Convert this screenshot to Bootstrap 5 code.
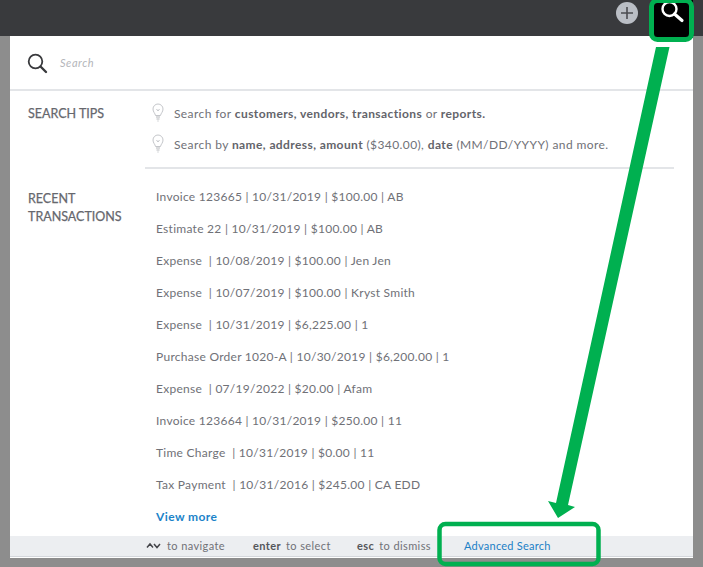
<!DOCTYPE html>
<html lang="en">
<head>
<meta charset="utf-8">
<title>Search</title>
<link href="https://cdn.jsdelivr.net/npm/bootstrap@5.3.0/dist/css/bootstrap.min.css" rel="stylesheet">
<style>
html,body{height:100%;margin:0;overflow:hidden}
body{background:#8d8d8d;font-family:Lato,"Liberation Sans",sans-serif;color:#707177;font-size:12px;position:relative}
.topbar{height:36px;background:#393a3d;padding-right:10px}
.plus-btn{width:22px;height:22px;border-radius:50%;background:#babec5;margin-right:14px;margin-top:-10px}
.search-tab{width:41px;height:38px;background:#000;align-self:flex-start}
.panel{margin:0 10px;height:522px;background:#fff;width:683px}
.search-row{height:55px;border-bottom:2px solid #e3e5e8;padding-left:17px;padding-top:2px}
.search-ph{font-style:italic;color:#b4b6ba;font-size:11px;margin-left:12px;letter-spacing:.55px}
.side-label{width:135px;flex:none;padding-left:18px;font-size:12.5px;font-weight:400;color:#66676d;line-height:18px;-webkit-text-stroke:.25px #66676d}
.tips{height:77px;padding-top:14px}
.tips-body{width:529px}
.tip{height:31px;display:flex;gap:10px;letter-spacing:.4px;line-height:18px;padding-left:7px}
.tip b{font-weight:700;color:#63646a}
.tip svg{flex:none;margin-top:-2px}
.tips-rule{border-top:2px solid #e3e5e8}
.recent{padding-top:21px}
.recent .side-label{padding-top:1px}
.tx-list{padding-left:11px;letter-spacing:.27px;margin-top:-1px}
.tx{height:32px;line-height:18px}
.view-more{color:#1b83c9;font-weight:700;text-decoration:none;letter-spacing:.4px;display:block;line-height:18px}
.foot{height:21px;background:#eceef1;border-bottom:1px solid #d4d7dc;font-size:11px;letter-spacing:.4px;padding-top:1px}
.foot b{font-weight:700;color:#55565b}
.adv{color:#1b7fc6;text-decoration:none;letter-spacing:.25px}
.key-gap{margin-left:5px}
.nav-gap{margin-left:6px}
.f1{margin-left:136px;width:107px}.f2{width:104px}.f3{width:107px}
.overlay{position:absolute;left:0;top:0;width:703px;height:567px;pointer-events:none}
.body-main{height:445px}
</style>
</head>
<body>
<div class="topbar d-flex justify-content-end align-items-center">
  <div class="plus-btn d-flex align-items-center justify-content-center">
    <svg width="14" height="14" viewBox="0 0 14 14"><path d="M7 1v12M1 7h12" stroke="#4b4c50" stroke-width="1.6"/></svg>
  </div>
  <div class="search-tab d-flex justify-content-center">
    <svg width="26" height="26" viewBox="1.500 1 26 26"><circle cx="11" cy="10" r="7" fill="none" stroke="#fff" stroke-width="2.4"/><path d="M16 15l7.500 6.500" stroke="#fff" stroke-width="3.200" stroke-linecap="round"/></svg>
  </div>
</div>
<div class="panel d-flex flex-column">
  <div class="search-row d-flex align-items-center">
    <svg width="21" height="21" viewBox="0 0 21 21"><circle cx="8.500" cy="8.500" r="6.800" fill="none" stroke="#393a3d" stroke-width="1.800"/><path d="M13.500 13.500l5.500 5.500" stroke="#393a3d" stroke-width="2.400" stroke-linecap="round"/></svg>
    <span class="search-ph">Search</span>
  </div>
  <div class="body-main">
    <div class="tips d-flex">
      <div class="side-label">SEARCH TIPS</div>
      <div class="tips-body">
        <div class="tip">
          <svg width="12" height="19" viewBox="0 0 12 19"><path d="M3.500 12.500C3 10 1 9 1 6a5 5 0 0 1 10 0c0 3-2 4-2.500 6.500z" fill="none" stroke="#c4c6ca" stroke-width="1"/><path d="M4 14h4M4.500 16h3M5.500 18h1" stroke="#b5b7bb" stroke-width="1.200"/><path d="M4.500 6l1.500 2 1.500-2" fill="none" stroke="#c4c6ca"/></svg>
          <span>Search for <b>customers, vendors, transactions</b> or <b>reports.</b></span>
        </div>
        <div class="tip">
          <svg width="12" height="19" viewBox="0 0 12 19"><path d="M3.500 12.500C3 10 1 9 1 6a5 5 0 0 1 10 0c0 3-2 4-2.500 6.500z" fill="none" stroke="#c4c6ca" stroke-width="1"/><path d="M4 14h4M4.500 16h3M5.500 18h1" stroke="#b5b7bb" stroke-width="1.200"/><path d="M4.500 6l1.500 2 1.500-2" fill="none" stroke="#c4c6ca"/></svg>
          <span>Search by <b>name, address, amount</b> ($340.00), <b>date</b> (MM/DD/YYYY) and more.</span>
        </div>
        <div class="tips-rule"></div>
      </div>
    </div>
    <div class="recent d-flex">
      <div class="side-label">RECENT TRANSACTIONS</div>
      <div class="tx-list">
        <div class="tx">Invoice 123665 | 10/31/2019 | $100.00 | AB</div>
        <div class="tx">Estimate 22 | 10/31/2019 | $100.00 | AB</div>
        <div class="tx">Expense &nbsp;| 10/08/2019 | $100.00 | Jen Jen</div>
        <div class="tx">Expense &nbsp;| 10/07/2019 | $100.00 | Kryst Smith</div>
        <div class="tx">Expense &nbsp;| 10/31/2019 | $6,225.00 | 1</div>
        <div class="tx">Purchase Order 1020-A | 10/30/2019 | $6,200.00 | 1</div>
        <div class="tx">Expense &nbsp;| 07/19/2022 | $20.00 | Afam</div>
        <div class="tx">Invoice 123664 | 10/31/2019 | $250.00 | 11</div>
        <div class="tx">Time Charge &nbsp;| 10/31/2019 | $0.00 | 11</div>
        <div class="tx">Tax Payment &nbsp;| 10/31/2016 | $245.00 | CA EDD</div>
        <a class="view-more" href="#">View more</a>
      </div>
    </div>
  </div>
  <div class="foot d-flex align-items-center">
    <span class="f1"><svg width="15" height="7" viewBox="0 0 15 7" class="mb-1"><path d="M1 5.500l3-3.500 3 3.500M8 2l3 3.500 3-3.500" fill="none" stroke="#44454a" stroke-width="1.500"/></svg><span class="nav-gap">to navigate</span></span>
    <span class="f2"><b>enter</b><span class="key-gap">to select</span></span>
    <span class="f3"><b>esc</b><span class="key-gap">to dismiss</span></span>
    <a class="adv" href="#">Advanced Search</a>
  </div>
</div>
<svg class="overlay" viewBox="0 0 703 567">
  <rect x="651.500" y="0.500" width="40" height="39" rx="6" fill="none" stroke="#00b050" stroke-width="5"/>
  <rect x="439.500" y="524" width="159" height="40" rx="6" fill="none" stroke="#00b050" stroke-width="4.500"/>
  <path d="M656 47h13.500L568 505l7 2-17 11-10-17 8 2z" fill="#00b050"/>
</svg>
</body>
</html>
